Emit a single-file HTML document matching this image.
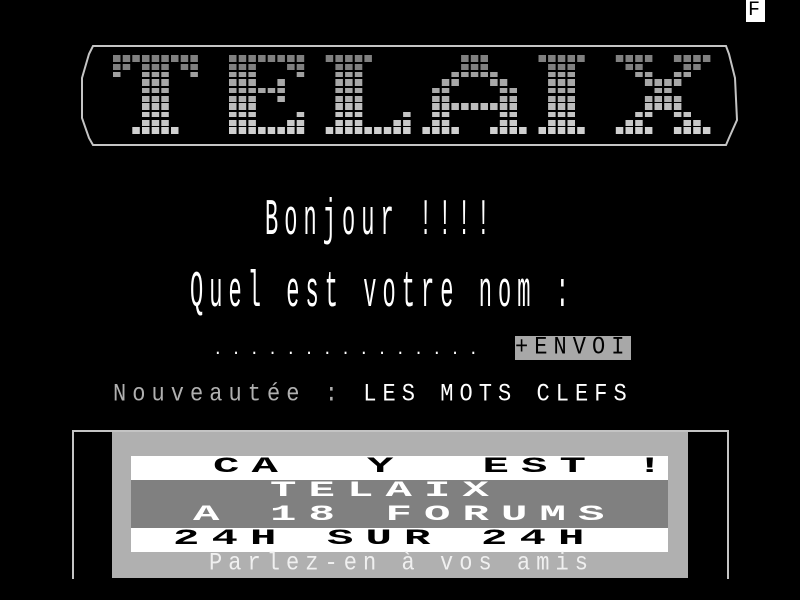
<!DOCTYPE html>
<html><head><meta charset="utf-8">
<style>
html,body{margin:0;padding:0;background:#000;width:800px;height:600px;overflow:hidden}
body{position:relative;font-family:"Liberation Mono",monospace;}
.t{position:absolute;white-space:pre;font-size:22px;letter-spacing:6.05px;line-height:24px;color:#fff;transform-origin:0 0}
.dh{transform:scaleY(2.3)}
.dw{transform:scaleX(2)}
.n{transform:scaleY(1.15)}
</style></head><body>
<div style="position:absolute;left:746px;top:0;width:19px;height:22px;background:#fff"></div>
<div class="t" style="left:748px;top:-1px;color:#000;font-size:20px;letter-spacing:0">F</div>

<svg width="800" height="160" style="position:absolute;left:0;top:0" id="logo">
<polygon points="93,46 726,46 729,54 735,78 737,120 729,138 726,145 93,145 89,138 82,118 82,78 89,54" fill="none" stroke="#c4c4c4" stroke-width="2"/>
<g id="blk"></g>
</svg>
<script>
(function(){
var ys=[55,64,72,79,88,96,103,112,120,127],hs=[7,6,5,7,5,6,7,5,6,7];
var cols=['#808080','#808080','#a0a0a0','#a8a8a8','#a8a8a8','#b0b0b0','#bdbdbd','#c4c4c4','#c8c8c8','#d0d0d0'];
function r(a,b){var o=[];for(var i=a;i<=b;i++)o.push(i);return o;}
var L={
T:{s:0,rows:[r(0,8),[0,1,3,4,5,7,8],[0,3,4,5,8],[3,4,5],[3,4,5],[3,4,5],[3,4,5],[3,4,5],[3,4,5],r(2,6)]},
E:{s:12,rows:[r(0,7),[0,1,2,6,7],[0,1,2,7],[0,1,2,5],r(0,5),[0,1,2,5],[0,1,2],[0,1,2,7],[0,1,2,6,7],r(0,7)]},
L:{s:22,rows:[r(0,4),[1,2,3],[1,2,3],[1,2,3],[1,2,3],[1,2,3],[1,2,3],[1,2,3,8],[1,2,3,7,8],r(0,8)]},
A:{s:32,rows:[[4,5,6],[4,5,6],[3,4,5,6,7],[2,3,7,8],[1,2,8,9],[1,2,8,9],r(1,9),[1,2,8,9],[1,2,8,9],[0,1,2,3,7,8,9,10]]},
I:{s:44,rows:[r(0,4),[1,2,3],[1,2,3],[1,2,3],[1,2,3],[1,2,3],[1,2,3],[1,2,3],[1,2,3],r(0,4)]},
X:{s:52,rows:[[0,1,2,3,6,7,8,9],[1,2,7,8],[2,3,6,7],[3,4,5,6],[4,5],[3,4,5,6],[3,4,5,6],[2,3,6,7],[1,2,7,8],[0,1,2,3,6,7,8,9]]}
};
var h='';
for(var k in L){var g=L[k];for(var y=0;y<10;y++){g.rows[y].forEach(function(c){
var x=113+(g.s+c)*9.67;h+='<rect x="'+x.toFixed(1)+'" y="'+ys[y]+'" width="7.5" height="'+hs[y]+'" fill="'+cols[y]+'"/>';});}}
document.getElementById('blk').innerHTML=h;
})();
</script>

<div class="t dh" style="left:265px;top:195px">Bonjour !!!!</div>
<div class="t dh" style="left:190px;top:267px">Quel est votre nom :</div>

<div class="t" style="left:213px;top:338px;font-size:16px;letter-spacing:8.65px">...............</div>
<div style="position:absolute;left:515px;top:336px;width:116px;height:24px;background:#a8a8a8"></div>
<div class="t n" style="left:515px;top:334px;color:#000">+ENVOI</div>

<div class="t n" style="left:113px;top:381px;color:#b0b0b0">Nouveautée : <span style="color:#fff">LES MOTS CLEFS</span></div>

<div style="position:absolute;left:72px;top:430px;width:653px;height:147px;border:2px solid #c4c4c4;border-bottom:none;background:#000"></div>
<div style="position:absolute;left:112px;top:432px;width:576px;height:146px;background:#b0b0b0"></div>
<div style="position:absolute;left:131px;top:456px;width:537px;height:24px;background:#fff"></div>
<div style="position:absolute;left:131px;top:480px;width:537px;height:48px;background:#808080"></div>
<div style="position:absolute;left:131px;top:528px;width:537px;height:24px;background:#fff"></div>

<div class="t dw" style="left:213px;top:455px;color:#000;font-weight:bold">CA  Y  EST !</div>
<div class="t dw" style="left:270px;top:479px;color:#fff;font-weight:bold">TELAIX</div>
<div class="t dw" style="left:193px;top:503px;color:#fff;font-weight:bold">A 18 FORUMS</div>
<div class="t dw" style="left:173px;top:527px;color:#000;font-weight:bold">24H SUR 24H</div>
<div class="t n" style="left:209px;top:550px;color:#f0f0f0">Parlez-en à vos amis</div>
</body></html>
